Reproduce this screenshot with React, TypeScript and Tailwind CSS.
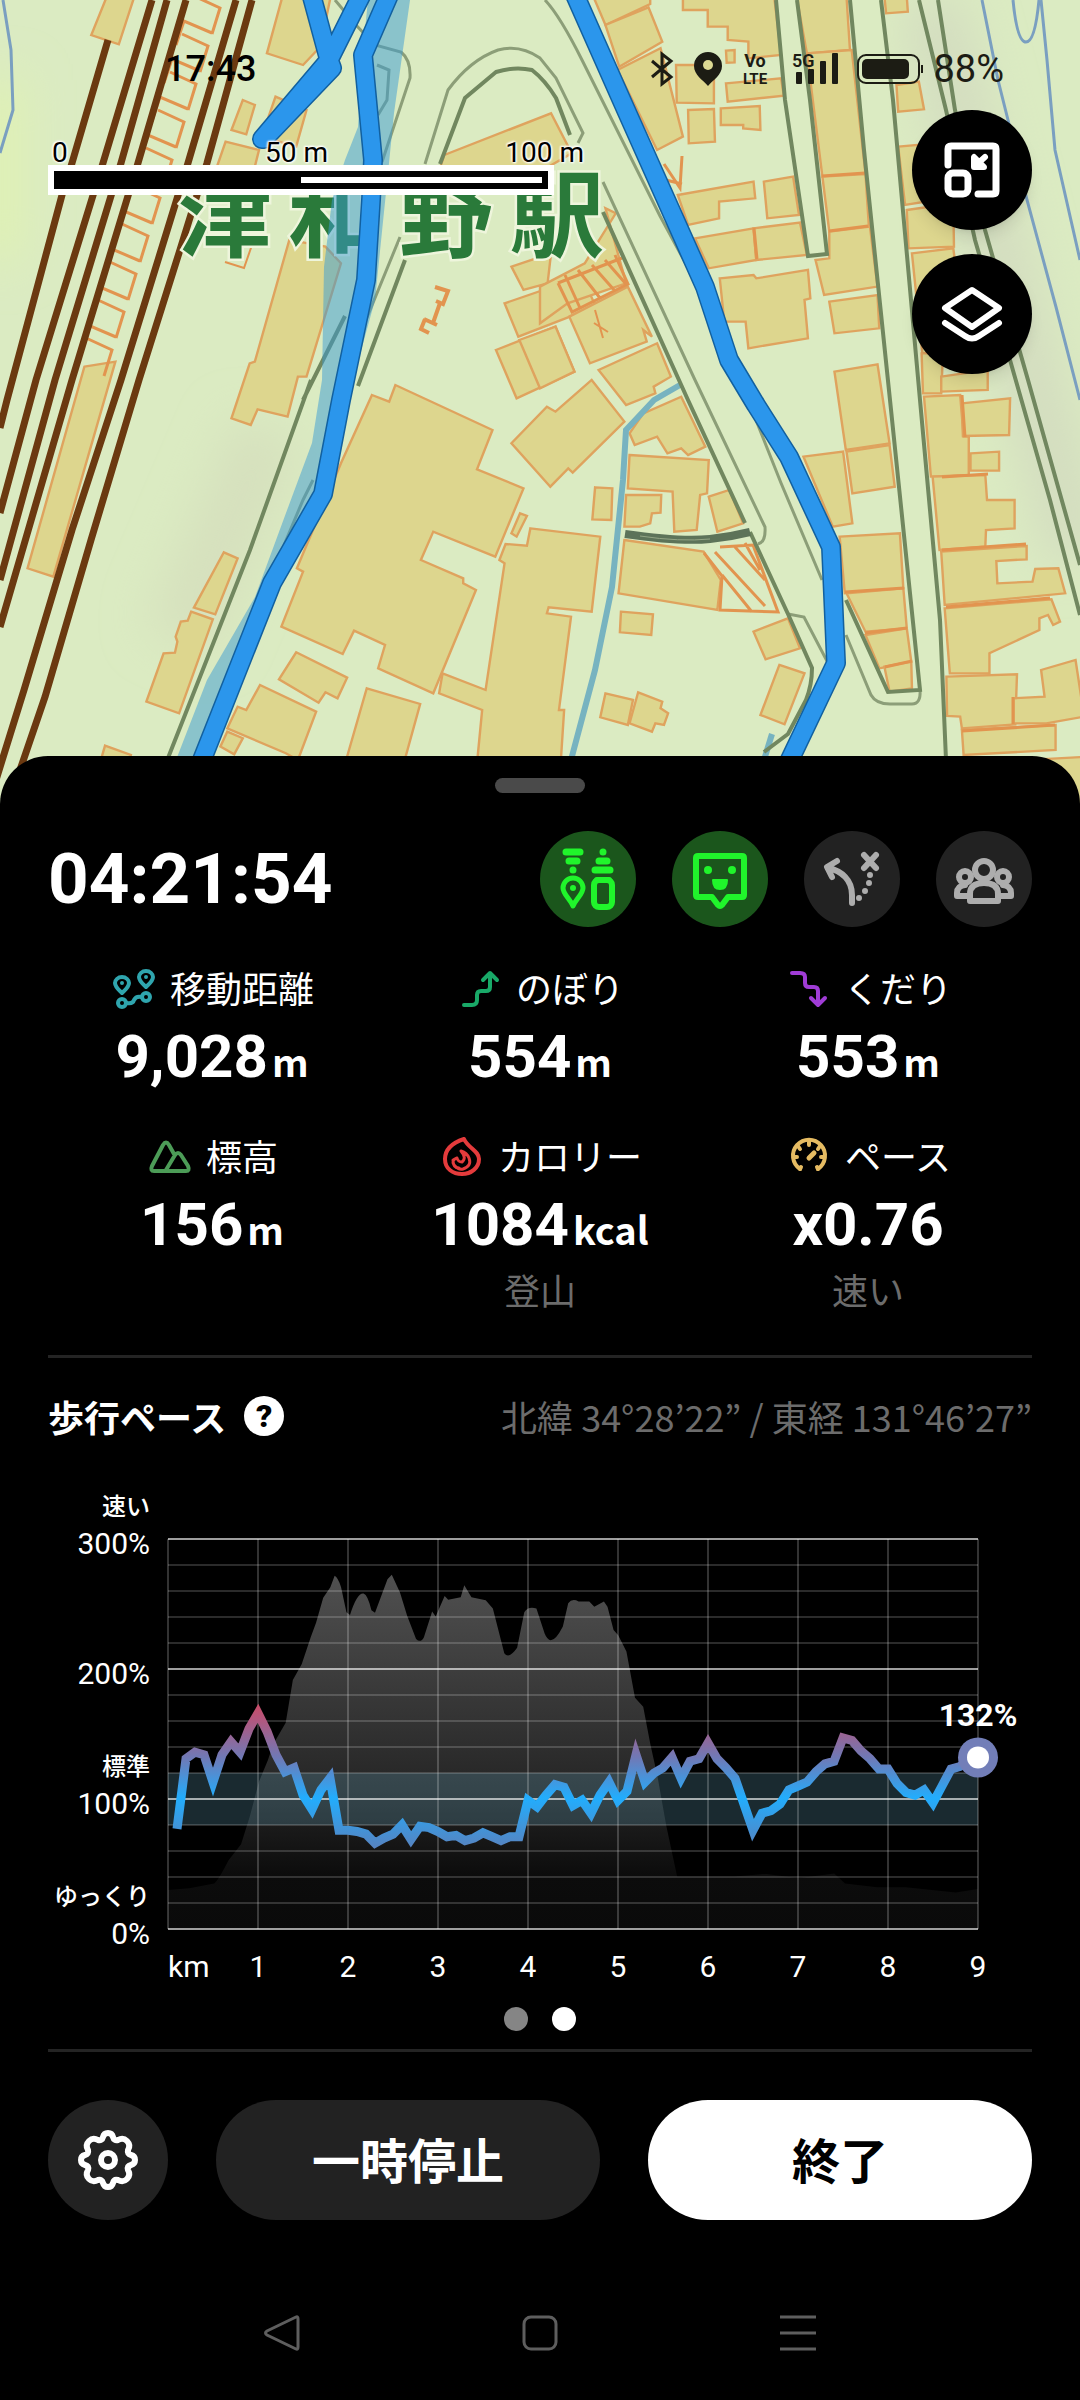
import type { ReactNode } from "react";

const JP = "font-['Noto_Sans_CJK_JP',sans-serif]";
const ROBOTO = "font-[Roboto,'Noto_Sans_CJK_JP',sans-serif]";

// Pace in % for every 100 m walked, starting at 0.1 km
const PACE = [
  77, 131, 136, 134, 113, 134, 144, 136, 154, 166, 152, 134, 121, 124, 103, 92, 107, 116, 76, 76, 75, 73, 66, 70, 73,
  80, 69, 79, 78, 75, 71, 72, 68, 70, 74, 71, 68, 71, 71, 99, 94, 103, 111, 109, 95, 99, 89, 103, 113, 99, 106, 134,
  113, 120, 124, 132, 116, 129, 131, 143, 131, 124, 116, 96, 76, 89, 91, 96, 107, 110, 113, 121, 127, 129, 147, 145,
  137, 131, 123, 123, 112, 105, 103, 107, 97, 110, 123, 125, 130, 132,
];

const METRICS = [
  { label: "移動距離", value: "9,028", unit: "m", icon: <DistanceIcon /> },
  { label: "のぼり", value: "554", unit: "m", icon: <UpIcon /> },
  { label: "くだり", value: "553", unit: "m", icon: <DownIcon /> },
  { label: "標高", value: "156", unit: "m", icon: <MountainIcon /> },
  { label: "カロリー", value: "1084", unit: "kcal", note: "登山", icon: <FlameIcon /> },
  { label: "ペース", value: "x0.76", note: "速い", icon: <GaugeIcon /> },
];

export default function App() {
  return (
    <div className={`min-h-screen bg-black text-white ${JP}`}>
      <MapView />
      <main className="relative -mt-12 rounded-t-[48px] bg-black px-12 pt-[22px]">
        <div className="mx-auto h-[15px] w-[90px] rounded-full bg-[#4a4a4a]" />

        <div className="mt-[38px] flex items-center justify-between">
          <h1 className={`text-[71px] leading-[96px] font-bold ${ROBOTO}`}>04:21:54</h1>
          <div className="flex gap-9">
            <RoundButton label="装備" active>
              <GearListIcon />
            </RoundButton>
            <RoundButton label="メッセージ" active>
              <FaceIcon />
            </RoundButton>
            <RoundButton label="ルート">
              <RouteIcon />
            </RoundButton>
            <RoundButton label="グループ">
              <GroupIcon />
            </RoundButton>
          </div>
        </div>

        <section className="mt-9 grid grid-cols-3 gap-y-11 pb-[42px]">
          {METRICS.map((m) => (
            <Metric key={m.label} {...m} />
          ))}
        </section>

        <section className="border-t-[3px] border-[#242424] pt-[34px]">
          <div className="flex items-center justify-between text-[36px] leading-[48px]">
            <div className="flex items-center gap-[18px]">
              <h2 className="font-bold">歩行ペース</h2>
              <button
                aria-label="ヘルプ"
                className={`flex size-10 items-center justify-center rounded-full bg-white text-[32px] leading-10 font-black text-black ${ROBOTO}`}
              >
                ?
              </button>
            </div>
            <p className="text-[#6c6c6c]">北緯 34°28’22” / 東経 131°46’27”</p>
          </div>
          <PaceChart />
          <div className="mt-[15px] flex justify-center gap-6 pb-[18px]">
            <span className="size-6 rounded-full bg-[#858585]" />
            <span className="size-6 rounded-full bg-white" />
          </div>
        </section>

        <footer className="flex gap-12 border-t-[3px] border-[#242424] pt-12 text-[48px] font-bold">
          <button aria-label="設定" className="flex size-[120px] items-center justify-center rounded-full bg-[#222]">
            <SettingsIcon />
          </button>
          <button className="h-[120px] flex-1 rounded-full bg-[#222] pb-1">一時停止</button>
          <button className="h-[120px] flex-1 rounded-full bg-white pb-1 text-black">終了</button>
        </footer>
      </main>
      <NavBar />
    </div>
  );
}

function RoundButton({ label, active, children }: { label: string; active?: boolean; children: ReactNode }) {
  return (
    <button
      aria-label={label}
      className={`size-24 rounded-full ${active ? "bg-[#1b561c] text-[#20f52b]" : "bg-[#222] text-[#adadad]"}`}
    >
      <svg viewBox="0 0 96 96" className="size-24" fill="none" stroke="currentColor" strokeLinecap="round" strokeLinejoin="round">
        {children}
      </svg>
    </button>
  );
}

function Metric({
  label,
  value,
  unit,
  note,
  icon,
}: {
  label: string;
  value: string;
  unit?: string;
  note?: string;
  icon: ReactNode;
}) {
  return (
    <div className="flex flex-col items-center">
      <div className="flex items-center gap-3 text-[36px] leading-[48px]">
        <svg viewBox="0 0 48 48" className="size-12" fill="none" strokeLinecap="round" strokeLinejoin="round">
          {icon}
        </svg>
        {label}
      </div>
      <div className="mt-4 flex h-[60px] items-baseline gap-1 font-bold">
        <span className={`text-[60px] leading-[60px] ${ROBOTO}`}>{value}</span>
        {unit && <span className="text-[38px] leading-[38px]">{unit}</span>}
      </div>
      {note && <div className="mt-[10px] text-[36px] leading-[48px] text-[#6c6c6c]">{note}</div>}
    </div>
  );
}

function PaceChart() {
  const px = (km: number) => 120 + km * 90;
  const py = (pct: number) => 449 - pct * 1.3;
  const line = PACE.map((p, i) => `${px((i + 1) / 10)},${py(p)}`).join(" ");

  return (
    <svg viewBox="0 0 984 512" className="mt-10 block w-full overflow-visible" fill="#fff">
      <defs>
        <linearGradient id="hill" gradientUnits="userSpaceOnUse" x1="0" y1="265" x2="0" y2="1256">
          <stop offset="0" stopColor="#505050" />
          <stop offset="0.6" stopColor="#262626" />
          <stop offset="0.85" stopColor="#0c0c0c" />
          <stop offset="1" stopColor="#0a0a0a" />
        </linearGradient>
        <linearGradient id="pace" gradientUnits="userSpaceOnUse" x1="0" y1={py(180)} x2="0" y2={py(60)}>
          <stop offset="0" stopColor="#d6455a" />
          <stop offset="0.15" stopColor="#b4567c" />
          <stop offset="0.4" stopColor="#7079b6" />
          <stop offset="0.66" stopColor="#22adfd" />
          <stop offset="1" stopColor="#5a80bc" />
        </linearGradient>
      </defs>

      <path
        transform="translate(-48 0) scale(.35714)"
        fill="url(#hill)"
        d="M470 1148L530 1143L600 1130Q612 1120 640 1065L675 1020L700 940L725 845L750 785L765 740L800 680L820 560L845 515L870 440L885 400L905 330L925 300L937 268Q946 272 955 300L970 370L980 378Q1000 315 1018 318Q1030 322 1040 365L1050 372L1085 278L1097 265L1120 315L1140 380L1165 445Q1178 458 1187 440L1210 368L1220 382L1245 325L1255 335L1290 328L1300 295L1320 328L1360 337L1380 360L1412 485Q1425 503 1448 470L1468 370Q1480 352 1502 360L1525 430Q1543 475 1576 410L1591 345Q1602 330 1620 340L1650 340L1664 355L1691 340L1701 355L1718 420L1731 435L1754 480L1778 610L1801 635L1821 740L1841 830L1866 970L1896 1110L2056 1110L2146 1103L2236 1115L2336 1102L2366 1130L2456 1140L2536 1140L2676 1155L2738 1145V1256H470Z"
      />
      <rect x="120" y={py(120)} width="810" height="52" fill="#5f9db0" fillOpacity="0.27" />

      {Array.from({ length: 16 }, (_, i) => (
        <line
          key={i}
          x1="120"
          x2="930"
          y1={py(i * 20)}
          y2={py(i * 20)}
          stroke="#fff"
          strokeWidth="2"
          strokeOpacity={i % 5 === 0 ? 0.62 : 0.17}
        />
      ))}
      {Array.from({ length: 10 }, (_, i) => (
        <line key={i} x1={px(i)} x2={px(i)} y1="59" y2="449" stroke="#fff" strokeWidth="2" strokeOpacity="0.2" />
      ))}

      <polyline points={line} fill="none" stroke="url(#pace)" strokeWidth="9" />
      <circle cx="930" cy={py(132)} r="20" fill="#727eb8" />
      <circle cx="930" cy={py(132)} r="11" />

      <g className={ROBOTO} fontSize="30">
        <g textAnchor="end">
          {[300, 200, 100, 0].map((p) => (
            <text key={p} x="102" y={py(p) + 15}>
              {p}%
            </text>
          ))}
        </g>
        <text x="120" y="497">
          km
        </text>
        <g textAnchor="middle">
          {[1, 2, 3, 4, 5, 6, 7, 8, 9].map((n) => (
            <text key={n} x={px(n)} y="497">
              {n}
            </text>
          ))}
          <text x="930" y="246" fontWeight="700" fontSize="32">
            132%
          </text>
        </g>
      </g>
      <g className={JP} fontSize="24" fontWeight="500" textAnchor="end">
        <text x="102" y="35">
          速い
        </text>
        <text x="102" y="295">
          標準
        </text>
        <text x="102" y="425">
          ゆっくり
        </text>
      </g>
    </svg>
  );
}

function MapView() {
  return (
    <header className={`relative h-[804px] overflow-hidden text-black ${ROBOTO}`}>
      <MapCanvas />
      <div className="relative flex h-[110px] items-center justify-between pt-7 pr-[76px] pl-[165px] text-[36px] leading-10">
        <span className="font-medium">17:43</span>
        <div className="flex items-center text-[38px] text-[#1c1c14]">
          <svg viewBox="0 0 190 40" className="h-10 w-[190px]" fill="currentColor">
            <path d="M1 12L20 28L11 35V5L20 12L1 28" fill="none" stroke="currentColor" strokeWidth="3" />
            <path d="M57 3A14 14 0 0 0 43 17C43 26 52 31 57 37C62 31 71 26 71 17A14 14 0 0 0 57 3Z" />
            <circle cx="57" cy="16" r="5" fill="#dcd993" />
            <text x="104" y="18" textAnchor="middle" fontSize="18" fontWeight="700">
              Vo
            </text>
            <text x="104" y="35" textAnchor="middle" fontSize="15" fontWeight="700">
              LTE
            </text>
            <text x="141" y="18" fontSize="18" fontWeight="600">
              5G
            </text>
            <rect x="145" y="23" width="6" height="12" rx="1" />
            <rect x="157" y="20" width="6" height="15" rx="1" />
            <rect x="169" y="12" width="6" height="23" rx="1" />
            <rect x="181" y="4" width="6" height="31" rx="1" />
          </svg>
          <svg viewBox="0 0 68 32" className="mr-2 ml-4 h-8 w-[68px]" fill="none">
            <rect x="1" y="2" width="61" height="28" rx="8" stroke="currentColor" strokeWidth="2" />
            <rect x="5" y="6" width="47" height="20" rx="5" fill="currentColor" />
            <path d="M65 12V20" stroke="currentColor" strokeWidth="2" />
          </svg>
          88%
        </div>
      </div>
      <div className="relative flex justify-between pr-12 pl-12">
        <ScaleBar />
        <div className="flex flex-col gap-6">
          <MapButton label="縮小表示">
            <path d="M36 55V39Q36 36 39 36H81Q84 36 84 39V81Q84 84 81 84H66" strokeWidth="7" />
            <rect x="36" y="63" width="20" height="21" rx="5" strokeWidth="7" />
            <path d="M73 47L63 56M62 47V57H72Z" strokeWidth="6" />
          </MapButton>
          <MapButton label="地図レイヤー">
            <path d="M60 36L87 54L60 73L33 54Z" strokeWidth="6" />
            <path d="M33 69L53 82Q60 87 67 82L87 69" strokeWidth="6" />
          </MapButton>
        </div>
      </div>
    </header>
  );
}

function MapButton({ label, children }: { label: string; children: ReactNode }) {
  return (
    <button aria-label={label} className="size-[120px] rounded-full bg-black text-white shadow-lg">
      <svg viewBox="0 0 120 120" className="size-[120px]" fill="none" stroke="currentColor" strokeLinecap="round" strokeLinejoin="round">
        {children}
      </svg>
    </button>
  );
}

function ScaleBar() {
  return (
    <div className="mt-[31px] w-[536px] text-[28px] leading-[24px] [text-shadow:0_0_3px_#fff,0_0_3px_#fff,1px_1px_2px_#fff,-1px_-1px_2px_#fff]">
      <div className="flex justify-between pl-1">
        <span>0</span>
        <span className="ml-5">50 m</span>
        <span>100 m</span>
      </div>
      <div className="w-[506px] bg-white p-[6px]">
        <div className="flex h-[18px] justify-end bg-black p-[6px]">
          <div className="h-full w-1/2 bg-white" />
        </div>
      </div>
    </div>
  );
}

const RAILS = [
  "108,40 72,163 62,195 7,400 0,428",
  "152,0 103,163 36,380 0,513",
  "167,0 121,163 55,380 0,580",
  "186,0 138,163 72,380 0,627",
  "236,0 188,163 121,380 72,530 24,690 -4,780",
  "252,0 207,163 179,253 139,380 91,540 45,697 20,770",
];

// Building outlines per map tile; each tile is 1568x1200 units wide and drawn at 540x400
const BUILDINGS_NW = [
  "310,-10 390,-10 345,133 265,105",
  "820,-10 960,-10 930,140 880,195 775,160",
  "705,300 740,315 715,403 672,390",
  "655,425 752,450 735,520 630,500",
  "800,290 890,330 860,440 760,410",
  "840,720 945,740 990,790 890,1130 865,1130 835,1250 748,1228 728,1275 672,1255 725,1090 740,1085",
  "1290,465 1600,340 1660,460 1560,520 1260,560",
  "1485,800 1520,870 1590,850 1600,760",
  "1465,910 1690,830 1730,920 1505,1010",
  "1440,1050 1613,980 1668,1115 1500,1195",
];
const BUILDINGS_NE = [
  "155,-10 320,-10 320,12 190,75",
  "190,75 315,22 355,125 230,200",
  "225,210 350,145 415,410 340,450",
  "395,195 505,195 505,310 397,308",
  "430,330 505,327 508,425 432,430",
  "525,325 638,318 640,390 590,385 590,375 525,375",
  "540,250 700,235 708,287 545,305",
  "540,152 565,150 565,187 542,188",
  "415,-10 680,-10 700,165 605,175 605,125 545,120 545,80 487,80 487,30 415,30",
  "745,-10 890,-10 900,150 775,160",
  "775,160 905,150 945,520 820,530",
  "820,530 945,522 955,680 840,695",
  "840,695 958,680 980,860 825,885 800,780 840,775",
  "840,905 980,885 985,985 855,1000",
  "855,1115 980,1093 1015,1330 888,1350",
  "400,585 620,545 625,595 520,605 520,655 430,675",
  "650,545 735,530 752,645 660,655",
  "450,715 620,685 628,780 490,805",
  "620,685 755,668 775,765 628,780",
  "522,835 620,825 628,835 778,810 785,895 768,900 778,1015 605,1045 597,965 535,965",
  "1000,-10 1065,-10 1068,35 1005,40",
  "1035,255 1100,245 1115,328 1040,335",
  "1040,440 1150,430 1150,600 1060,615",
  "1065,630 1200,610 1202,740 1070,745",
  "1080,760 1200,745 1240,1050 1110,1060",
  "1108,1060 1170,1060 1165,1180 1112,1180",
  "1165,1130 1300,1110 1300,1170 1165,1175",
  "0,860 130,790 220,640 190,625 250,850 80,910 0,970",
  "85,950 255,860 325,1010 300,990 310,1025 145,1090",
  "-60,1020 45,980 100,1115 0,1165",
  "170,1110 340,1030 380,1130 330,1160 335,1180 250,1215",
];
const BUILDINGS_SW = [
  "245,-40 335,-55 155,590 80,565",
  "1080,45 1130,65 1148,15 1430,150 1385,268 1520,325 1438,530 1258,455 1222,540 1345,595 1345,610 1382,630 1258,940 1098,865 1118,795 1028,752 995,822 817,740 880,575 862,565 990,250",
  "1510,400 1530,408 1500,470 1485,460",
  "860,817 1008,893 980,955 945,937 925,968 810,898",
  "755,915 918,995 865,1140 830,1120 660,1045 690,980 715,990",
  "660,1055 705,1075 680,1123 640,1100",
  "1065,925 1220,972 1175,1140 1005,1140",
  "650,517 690,535 625,703 563,683",
  "555,695 618,718 520,1000 425,965 475,820 508,818 515,785 510,770 525,725 545,722",
  "305,1097 380,1125 370,1160 290,1150",
  "1540,445 1743,470 1718,695 1593,682 1588,700 1658,710 1623,990 1638,990 1628,1150 1385,1150 1400,990 1275,940 1285,880 1410,930 1465,550 1450,540 1468,492 1530,497",
];
const BUILDINGS_SE = [
  "-83,190 20,80 45,95 150,0 245,125 95,278 82,265 30,320",
  "260,160 300,100 410,50 480,200 430,225 410,205 370,220 340,170 275,195",
  "260,225 490,240 485,340 465,345 455,450 390,455 385,335 255,325",
  "160,322 210,325 207,420 152,418",
  "250,345 352,345 350,398 325,400 320,430 290,440 245,440",
  "490,350 550,330 590,430 515,455",
  "245,480 475,515 525,600 515,690 228,640",
  "235,695 328,703 323,765 232,757",
  "620,755 720,715 755,805 655,838",
  "695,855 768,880 710,1033 640,1005",
  "190,940 270,960 255,1035 175,1012",
  "285,937 355,965 350,985 372,1000 360,1035 335,1030 325,1055 260,1030",
  "765,230 880,215 907,430 850,440",
  "890,215 1015,195 1030,320 907,340",
  "870,470 1045,460 1055,625 885,640",
  "890,640 1055,625 1065,745 945,755",
  "945,765 1065,745 1078,845 985,865",
  "1000,860 1078,845 1080,925 1015,935",
  "1115,50 1220,45 1230,170 1245,170 1245,285 1135,290",
  "1225,70 1365,55 1362,165 1228,168",
  "1250,220 1333,215 1333,272 1250,272",
  "1140,290 1293,285 1298,360 1378,360 1378,445 1295,450 1293,500 1160,510",
  "1165,515 1413,498 1413,538 1325,543 1328,610 1430,605 1438,567 1505,565 1525,640 1175,675",
  "1175,685 1485,658 1510,725 1490,735 1475,705 1450,715 1450,750 1305,820 1305,880 1190,880",
  "1180,890 1385,883 1380,1033 1225,1045 1220,1010 1182,1008",
  "1375,955 1465,950 1455,870 1555,840 1580,1010 1470,1030 1375,1030",
  "1225,1050 1497,1035 1497,1110 1230,1125",
  "1230,1150 1600,1130 1600,1300 1230,1300",
];

function Buildings({ at, shapes }: { at: string; shapes: string[] }) {
  return (
    <g transform={`translate(${at}) scale(.3444 .3333)`} fill="#ddd68e" stroke="#dfa35e" strokeWidth="7">
      {shapes.map((s) => (
        <polygon key={s} points={s} />
      ))}
    </g>
  );
}

function MapCanvas() {
  // Platform roof: slanted cells with an open lower corner, stepping down along the rails
  const hatch = Array.from({ length: 19 }, (_, i) => {
    const x = 194 - i * 6;
    const y = i * 19 - 4;
    return i % 2 === 0 ? `M${x} ${y}L${x + 26} ${y + 12}L${x + 18} ${y + 38}` : `M${x + 24} ${y + 18}L${x - 4} ${y + 6}L${x - 12} ${y + 30}`;
  }).join("");

  return (
    <svg viewBox="0 0 1080 804" preserveAspectRatio="xMidYMin slice" className="absolute inset-0 size-full" fill="none">
      <defs>
        <filter id="soft" x="-50%" y="-50%" width="200%" height="200%">
          <feGaussianBlur stdDeviation="24" />
        </filter>
      </defs>
      <rect width="1080" height="804" fill="#dbebc2" />
      <g filter="url(#soft)">
        <path d="M0 80V260" stroke="#e0f3b0" strokeWidth="40" />
        <path d="M270 430L180 640" stroke="#d6e0bd" strokeWidth="70" />
        <path d="M930 0L1010 300L1080 560" stroke="#d3dcc0" strokeWidth="60" />
      </g>

      <Buildings at="0 0" shapes={BUILDINGS_NW} />
      <Buildings at="540 0" shapes={BUILDINGS_NE} />
      <Buildings at="0 380" shapes={BUILDINGS_SW} />
      <Buildings at="540 380" shapes={BUILDINGS_SE} />

      <g stroke="#e2944f" strokeWidth="2">
        <path d={hatch} strokeWidth="3" />
        <path d="M252 245L244 268L225 262" />
        <path d="M435 287L448 291L443 304L436 301M440 303L433 323M424 319L437 325M425 319L421 329L429 333" strokeWidth="4" />
        <path d="M558 283L622 258M558 283L572 312L628 284L615 255M565 275L580 308M578 270L600 298M592 265L615 291M605 260L626 284" strokeWidth="3" />
        <path d="M594 323L608 332M595 310L603 338" strokeWidth="2" />
        <path d="M664 164L680 188L682 156M666 180L682 184" strokeWidth="3" />
        <path d="M704 553L722 576L720 610L778 612L753 545L720 547M715 552L765 606M722 575L752 612M735 547L765 580M745 543L760 570" strokeWidth="3" />
        <path d="M822 176L865 173M829 231L868 226M754 228L757 259M845 592L904 588M865 633L907 628M885 667L912 661M962 395L965 437M1013 697V724M962 731L1055 725M942 550L1026 544M946 607L1050 598M942 477L988 474" strokeWidth="3" />
      </g>

      <g stroke="#6b3910" strokeWidth="7">
        {RAILS.map((r) => (
          <polyline key={r} points={r} />
        ))}
      </g>

      <g stroke="#7a9fc0" strokeWidth="3">
        <path d="M3 0L11 50L13 110L0 153" />
        <path d="M982 0L998 80L1008 120L1027 200L1056 307L1080 400" />
        <path d="M1013 0Q1017 42 1026 42Q1035 42 1039 0M1041 0L1047 60L1055 150L1080 260" />
      </g>
      <g stroke="#77b3c0" strokeWidth="6">
        <path d="M680 385L654 400L626 430L623 480L612 587L595 670L571 760" />
        <path d="M772 734L764 760" />
      </g>

      <path d="M776 0L808 256L827 254L797 0Z" fill="#dbebc2" />
      <path d="M850 0L890 360L920 690L948 760L922 500L881 0Z" fill="#dbebc2" />
      <g stroke="#8c9e78" strokeWidth="3">
        <path d="M425 164L448 90Q470 60 498 50Q520 44 540 58L556 78L583 133L578 143" />
        <path d="M545 0Q560 16 582 60L627 150L660 216L700 290L740 380L781 483L822 580" />
        <path d="M603 182L695 380L765 527Q766 542 758 544" />
        <path d="M788 614L804 617L828 663" />
        <path d="M846 635L871 695Q876 704 890 704H912Q921 704 920 690" />
        <path d="M335 0L355 24L375 45L401 52Q411 60 410 78L382 162M377 65L389 70L387 100L378 115" />
        <path d="M400 237L366 320M313 480L303 500L284 545" />
      </g>
      <g stroke="#71875f" strokeWidth="4">
        <path d="M440 164L465 98L496 72Q515 66 532 70Q545 80 556 98L570 135" />
        <path d="M603 212L688 400L745 523M750 532L788 614L812 668Q812 685 806 700L788 734L764 752" />
        <path d="M776 0L785 100L808 256L827 254L810 100L797 0" />
        <path d="M850 0L864 150L890 400L920 690L888 692L846 600" />
        <path d="M881 0L893 100L920 400L940 620L946 760" />
        <path d="M919 0L946 110L975 240L1010 360L1050 500L1080 615M938 0L955 110L985 230L1028 380L1080 565" />
        <path d="M405 260L358 386M311 380L250 550L168 758M345 316L303 400" />
      </g>
      <path d="M625 534Q680 542 710 539Q730 537 750 532" stroke="#5d7359" strokeWidth="8" />
      <path d="M640 536Q680 542 710 539" stroke="#93a585" strokeWidth="1" />

      <text
        x="178 288 399 510"
        y="250"
        fontSize="94"
        fontWeight="700"
        fill="#2a7a3a"
        stroke="#eef5dc"
        strokeWidth="5"
        paintOrder="stroke"
        className={JP}
      >
        津和野駅
      </text>

      <path
        d="M368 0H410L394 113L389 163L375 300L320 500L200 760H176L207 680L255 597L286 513L312 443L322 380L324 267L332 200L345 160L358 127L362 60Z"
        fill="#3a9bd4"
        fillOpacity="0.5"
      />
      {[
        { stroke: "#12609f", strokeWidth: 20 },
        { stroke: "#2b96ec", strokeWidth: 17 },
      ].map((s) => (
        <g key={s.stroke} {...s} strokeLinejoin="round" strokeLinecap="round">
          <path d="M309 -14L329 60L262 139M366 -14L329 60L332 68L264 139" />
          <path d="M393 -14L363 55L373 160L371 200L366 280L341 400L323 494L272 583L198 770" />
          <path d="M571 -14L626 110L705 287L729 360L756 405L789 457L831 547L836 663L785 770" />
        </g>
      ))}
    </svg>
  );
}

function GearListIcon() {
  return (
    <>
      <path d="M26 21H40M29 30H37M33 39V39M63 21V21M59 30H67M55 39H70" strokeWidth="7" />
      <path d="M33 47C27 47 23 52 23 57C23 63 30 68 33 75C36 68 43 63 43 57C43 52 39 47 33 47Z" strokeWidth="5" />
      <circle cx="33" cy="57" r="3" fill="currentColor" stroke="none" />
      <rect x="54" y="49" width="18" height="27" rx="5" strokeWidth="6" />
      <path d="M57 49H69" strokeWidth="6" />
    </>
  );
}

function FaceIcon() {
  return (
    <>
      <path d="M26 25H70Q72 25 72 27V64Q72 66 70 66H56L50 74Q48 76 46 74L40 66H26Q24 66 24 64V27Q24 25 26 25Z" strokeWidth="6" />
      <circle cx="36" cy="39" r="4" fill="currentColor" stroke="none" />
      <circle cx="60" cy="39" r="4" fill="currentColor" stroke="none" />
      <path d="M41 49H55Q55 58 48 58Q41 58 41 49Z" fill="currentColor" strokeWidth="2" />
    </>
  );
}

function RouteIcon() {
  return (
    <>
      <path d="M48 72V64C48 49 38 40 24 37M33 30L23 36L28 46" strokeWidth="6" />
      <path d="M60 24L72 37M72 24L60 37" strokeWidth="6" />
      <path d="M66 44V44M65 52V52M61 60V60M55 67V67" strokeWidth="6" />
    </>
  );
}

function GroupIcon() {
  return (
    <>
      <circle cx="48" cy="39" r="9" strokeWidth="6" />
      <circle cx="29" cy="46" r="6" strokeWidth="6" />
      <circle cx="67" cy="46" r="6" strokeWidth="6" />
      <path d="M34 70V63Q34 52 48 52Q62 52 62 63V70Z" strokeWidth="6" />
      <path d="M32 65H21V62Q21 55 29 54M64 65H75V62Q75 55 67 54" strokeWidth="6" />
    </>
  );
}

function DistanceIcon() {
  return (
    <g stroke="#2fa5ae" strokeWidth="4">
      <path d="M12 14C8 14 5 17 5 20C5 24 9 27 12 30C15 27 19 24 19 20C19 17 16 14 12 14ZM36 8C32 8 29 11 29 14C29 18 33 21 36 24C39 21 43 18 43 14C43 11 40 8 36 8Z" />
      <circle cx="12" cy="20" r="1" strokeWidth="2" />
      <circle cx="36" cy="14" r="1" strokeWidth="2" />
      <circle cx="12" cy="40" r="4" />
      <circle cx="36" cy="34" r="4" />
      <path d="M17 40Q23 41 24 37Q26 33 31 34" />
    </g>
  );
}

function UpIcon() {
  return (
    <path
      d="M8 42H16Q21 42 21 37V32Q21 28 25 28H30Q34 28 34 24V10M27 17L34 10L41 17"
      stroke="#19a968"
      strokeWidth="4"
    />
  );
}

function DownIcon() {
  return (
    <path
      d="M8 10H16Q21 10 21 14V20Q21 24 25 24H30Q34 24 34 28V42M27 35L34 42L41 35"
      stroke="#a03cd6"
      strokeWidth="4"
    />
  );
}

function MountainIcon() {
  return (
    <path
      d="M6 35L17 14Q20 9 23 14L28 23M20 39L29 24Q32 20 35 24L42 35Q44 40 40 40H8Q4 40 6 35"
      stroke="#4c9c57"
      strokeWidth="4"
    />
  );
}

function FlameIcon() {
  return (
    <g stroke="#e43b3c" strokeWidth="4">
      <path d="M26 8C14 12 7 18 7 28C7 38 15 43 24 43C33 43 41 37 41 28C41 20 30 17 26 8Z" />
      <path d="M15 29Q15 37 21 37M23 20Q29 27 24 31Q20 31 19 27Q13 29 16 34Q20 39 25 38Q34 35 31 27Q29 22 23 20" strokeWidth="3" />
    </g>
  );
}

function GaugeIcon() {
  return (
    <g stroke="#e5bb62" strokeWidth="4">
      <path d="M15 38A16 16 0 1 1 33 38" />
      <path d="M24 11V14M13 15L15 18M35 15L33 18M9 26H12M39 26H36M15 38L16 36M33 38L32 36" />
      <path d="M24 27L29 22" strokeWidth="5" />
    </g>
  );
}

function SettingsIcon() {
  return (
    <svg viewBox="0 0 60 60" className="size-[60px]" fill="none" stroke="currentColor" strokeWidth="6" strokeLinejoin="round">
      <path d="M30 3Q34 3 35 7Q36 11 40 10Q45 7 49 11Q53 15 50 20Q49 24 53 25Q57 26 57 30Q57 34 53 35Q49 36 50 40Q53 45 49 49Q45 53 40 50Q36 49 35 53Q34 57 30 57Q26 57 25 53Q24 49 20 50Q15 53 11 49Q7 45 10 40Q11 36 7 35Q3 34 3 30Q3 26 7 25Q11 24 10 20Q7 15 11 11Q15 7 20 10Q24 11 25 7Q26 3 30 3Z" />
      <circle cx="30" cy="30" r="7" />
    </svg>
  );
}

function NavBar() {
  return (
    <nav className="mt-[95px] flex justify-center gap-[222px] pb-12 text-[#5e5e5e]">
      <button aria-label="戻る">
        <svg viewBox="0 0 36 36" className="size-9" fill="none" stroke="currentColor" strokeWidth="3">
          <path d="M32 2Q34 1 34 4V32Q34 35 32 34L3 20Q0 18 3 16Z" />
        </svg>
      </button>
      <button aria-label="ホーム">
        <svg viewBox="0 0 36 36" className="size-9" fill="none" stroke="currentColor" strokeWidth="3">
          <rect x="2" y="2" width="32" height="32" rx="7" />
        </svg>
      </button>
      <button aria-label="履歴">
        <svg viewBox="0 0 36 36" className="size-9" stroke="currentColor" strokeWidth="3">
          <path d="M0 2H36M0 18H36M0 34H36" />
        </svg>
      </button>
    </nav>
  );
}
